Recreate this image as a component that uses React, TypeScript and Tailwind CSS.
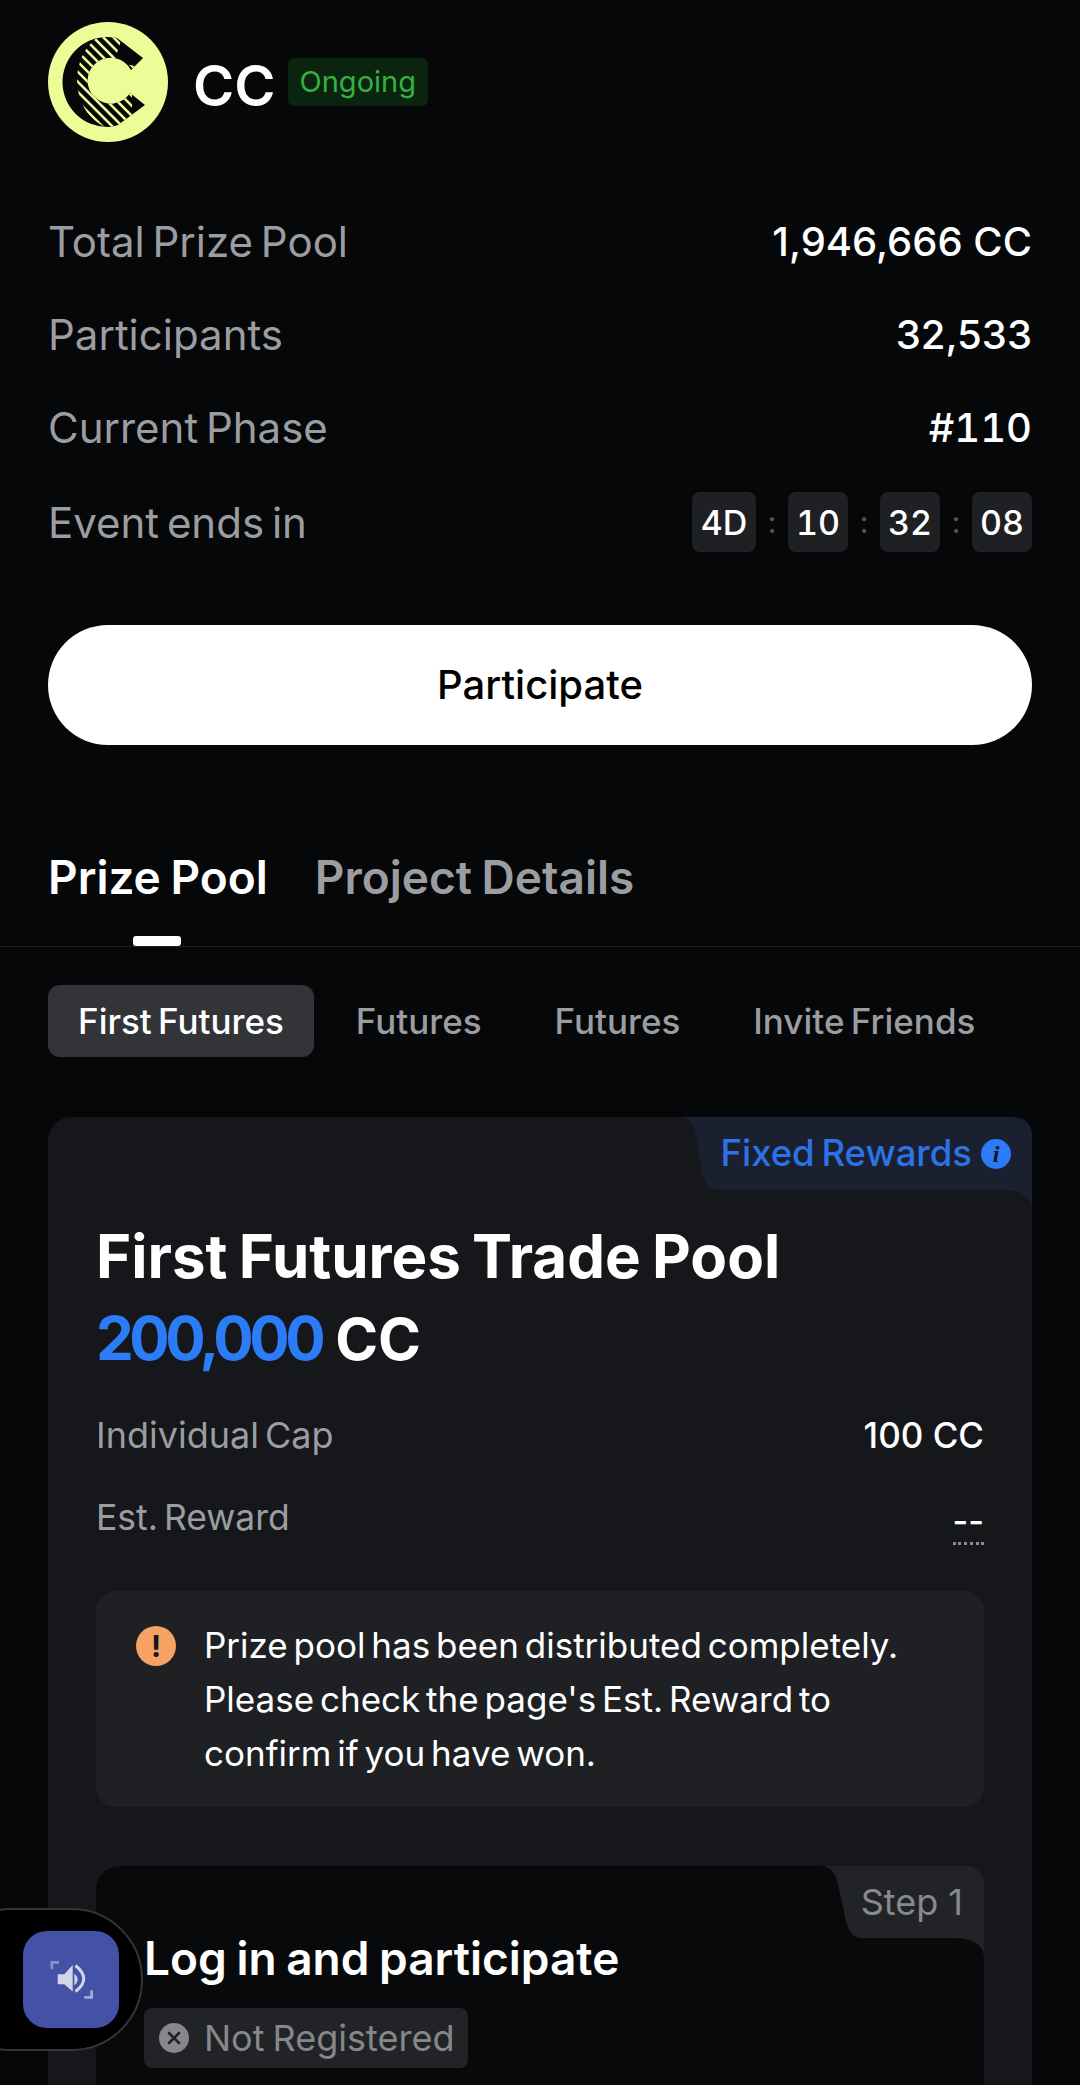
const INTER = { fontFamily: 'Inter, sans-serif' };
const C_PATH = 'M59 15 Q64 15 69 16 L95 36 L83 48 A23 23 0 1 0 82 71 L97 83 L70 103 Q65 105 60 105 A45 45 0 0 1 59 15 Z';

function Logo() {
  const stripes = [];
  for (let i = -100; i < 120; i += 10) {
    stripes.push(<line key={i} x1={i} y1={0} x2={i + 120} y2={120} stroke="#eefc97" strokeWidth="2.6" />);
  }
  return (
    <svg viewBox="0 0 120 120" className="h-[120px] w-[120px] shrink-0">
      <defs>
        <clipPath id="c-shape">
          <path d={C_PATH} />
        </clipPath>
        <mask id="band">
          <ellipse cx="72" cy="58" rx="43" ry="50" fill="white" />
          <path d="M76 10 L66 40 L120 50 L120 70 L84 72 L84 110 L120 110 L120 10 Z" fill="black" />
        </mask>
      </defs>
      <circle cx="60" cy="60" r="60" fill="#eefc97" />
      <path d={C_PATH} fill="#050708" />
      <g clipPath="url(#c-shape)">
        <g mask="url(#band)">{stripes}</g>
      </g>
    </svg>
  );
}

function StatRow({ label, value, tabular }: { label: string; value: string; tabular?: boolean }) {
  return (
    <div className="flex h-[93px] items-center justify-between">
      <span className="text-[42px] text-[#9b9da1] [word-spacing:-4px]">{label}</span>
      <span className={`text-[40px] font-medium text-white ${tabular ? 'tabular-nums' : ''}`}>{value}</span>
    </div>
  );
}

function TimeBox({ value, wide }: { value: string; wide?: boolean }) {
  return (
    <span
      className={`flex h-[60px] items-center justify-center rounded-[8px] bg-[#1e2023] text-[34px] font-medium tabular-nums text-white ${
        wide ? 'w-[64px]' : 'w-[60px]'
      }`}
    >
      {value}
    </span>
  );
}

function Colon() {
  return <span className="w-[32px] text-center text-[30px] text-[#55575a]">:</span>;
}

export default function App() {
  return (
    <div style={INTER} className="relative h-[2085px] w-[1080px] overflow-hidden bg-[#050708] text-white">
      <div className="px-12 pt-[22px]">
        <div className="flex items-center">
          <Logo />
          <span className="ml-[25px] pt-[8px] text-[56px] font-semibold leading-none">CC</span>
          <span className="ml-[12px] flex h-[48px] items-center rounded-[6px] bg-[#0a2410] px-[12px] text-[29px] text-[#35b043]">
            Ongoing
          </span>
        </div>

        <div className="mt-[53px]">
          <StatRow label="Total Prize Pool" value="1,946,666 CC" />
          <StatRow label="Participants" value="32,533" />
          <StatRow label="Current Phase" value="#110" tabular />
          <div className="flex h-[96px] items-center justify-between">
            <span className="text-[42px] text-[#9b9da1] [word-spacing:-4px]">Event ends in</span>
            <div className="flex items-center">
              <TimeBox value="4D" wide />
              <Colon />
              <TimeBox value="10" />
              <Colon />
              <TimeBox value="32" />
              <Colon />
              <TimeBox value="08" />
            </div>
          </div>
        </div>

        <button className="mt-[55px] flex h-[120px] w-full items-center justify-center rounded-full bg-white text-[40px] font-medium text-black">
          Participate
        </button>
      </div>

      <div className="relative mt-[100px] h-[102px] border-b border-[#1c1e20] px-12">
        <div className="flex items-center gap-[47px] text-[46px] font-semibold leading-[65px] [word-spacing:-2px]">
          <span className="text-white">Prize Pool</span>
          <span className="text-[#9b9da1]">Project Details</span>
        </div>
        <div className="absolute bottom-0 left-[133px] h-[10px] w-[48px] rounded-[3px] bg-white" />
      </div>

      <div className="mt-[38px] flex items-center gap-[9px] px-12 text-[35px] font-medium [word-spacing:-3px]">
        <span className="mr-[1px] flex h-[72px] items-center rounded-[12px] bg-[#323438] px-[30px] text-white">First Futures</span>
        <span className="px-[32px] text-[#9b9da1]">Futures</span>
        <span className="px-[32px] text-[#9b9da1]">Futures</span>
        <span className="px-[32px] text-[#9b9da1]">Invite Friends</span>
      </div>

      <section className="relative mx-12 mt-[60px] rounded-[24px] bg-[#15171a] px-12 pb-[40px] pt-[98px]">
        <svg viewBox="0 0 352 92" className="absolute right-0 top-0 h-[92px] w-[352px]">
          <path d="M0 0 H332 Q352 0 352 20 V92 Q350 73 322 73 H36 Q26 73 22 55 L16 20 Q12 0 0 0 Z" fill="#1a2030" />
        </svg>
        <div className="absolute right-[21px] top-0 flex h-[73px] items-center gap-[9px] text-[36.5px] font-medium text-[#2c73e6] [word-spacing:-3px]">
          Fixed Rewards
          <span className="flex h-[30px] w-[30px] items-center justify-center rounded-full bg-[#2b7cf6]">
            <span className="font-['Liberation_Serif',serif] text-[24px] font-bold italic leading-none text-[#15171a]">i</span>
          </span>
        </div>

        <h2 className="text-[60px] font-bold leading-[82px] [word-spacing:-3px]">First Futures Trade Pool</h2>
        <div className="text-[60px] font-bold leading-[82px]">
          <span className="tracking-[-4.5px] text-[#2b7cf6]">200,000</span>
          <span className="ml-[14px] text-[58px]">CC</span>
        </div>

        <div className="mt-[25px] flex h-[60px] items-center justify-between">
          <span className="text-[36px] text-[#9b9da1] [word-spacing:-4px]">Individual Cap</span>
          <span className="text-[35px] font-medium text-white">100 CC</span>
        </div>
        <div className="mt-[23px] flex h-[60px] items-center justify-between">
          <span className="text-[35.5px] text-[#9b9da1] [word-spacing:-4px]">Est. Reward</span>
          <span className="mt-[8px] border-b-[3px] border-dotted border-[#8a8c90] text-[34px] font-medium leading-[42px] text-white">--</span>
        </div>

        <div className="mt-[43px] flex gap-[28px] rounded-[20px] bg-[#1e2024] px-[40px] py-[27px]">
          <span className="mt-[8px] flex h-[40px] w-[40px] shrink-0 items-center justify-center rounded-full bg-[#f5a262] text-[30px] font-bold leading-none text-[#15171a]">!</span>
          <p className="text-[35px] leading-[54px] text-white [word-spacing:-4px]">
            Prize pool has been distributed completely. Please check the page's Est. Reward to confirm if you have won.
          </p>
        </div>

        <div className="relative mt-[59px] h-[400px] rounded-[24px] bg-[#08090a] px-12 pt-[64px]">
          <svg viewBox="0 0 164 90" className="absolute right-0 top-0 h-[90px] w-[164px]">
            <path d="M0 0 H144 Q164 0 164 20 V90 Q162 72 134 72 H42 Q30 72 26 55 L18 18 Q14 0 0 0 Z" fill="#212327" />
          </svg>
          <span className="absolute right-[21px] top-0 flex h-[72px] items-center text-[36px] text-[#88898c]">Step 1</span>
          <h3 className="text-[46px] font-semibold leading-[56px] [word-spacing:-2px]">Log in and participate</h3>
          <div className="mt-[22px] inline-flex h-[60px] items-center gap-[15px] rounded-[8px] bg-[#212327] pl-[15px] pr-[14px] text-[36px] text-[#85878b] [word-spacing:-2px]">
            <span className="flex h-[30px] w-[30px] items-center justify-center rounded-full bg-[#85878b]">
              <svg viewBox="0 0 16 16" className="h-[16px] w-[16px]" stroke="#212327" strokeWidth="2.6" strokeLinecap="round">
                <path d="M3 3 L13 13 M13 3 L3 13" />
              </svg>
            </span>
            Not Registered
          </div>
        </div>
      </section>

      {/* floating audio widget */}
      <div className="absolute left-[-60px] top-[1908px] flex h-[143px] w-[203px] items-center justify-end rounded-full border-2 border-[#333537] bg-black pr-[22px]">
        <div className="flex h-[97px] w-[96px] items-center justify-center rounded-[24px] bg-[#4352a6]">
          <svg viewBox="0 0 43 38" className="h-[38px] w-[43px]">
            <path d="M0.5 0 H9 V2.8 H3.2 V8.3 H0.5 Z" fill="#8a92c9" />
            <path d="M43 37.7 H34.3 V35 H40.2 V29.3 H43 Z" fill="#a2a9d6" />
            <path d="M7.7 13.3 H14.3 L22.7 4 V30.5 L14.3 23.3 H7.7 Z" fill="#d3d6ea" />
            <path d="M24.3 12.5 Q31 18.5 24.3 24.5 Z" fill="#d3d6ea" />
            <path d="M25.5 4.5 Q42 18 25.5 30.5" fill="none" stroke="#d3d6ea" strokeWidth="3" />
          </svg>
        </div>
      </div>
    </div>
  );
}
